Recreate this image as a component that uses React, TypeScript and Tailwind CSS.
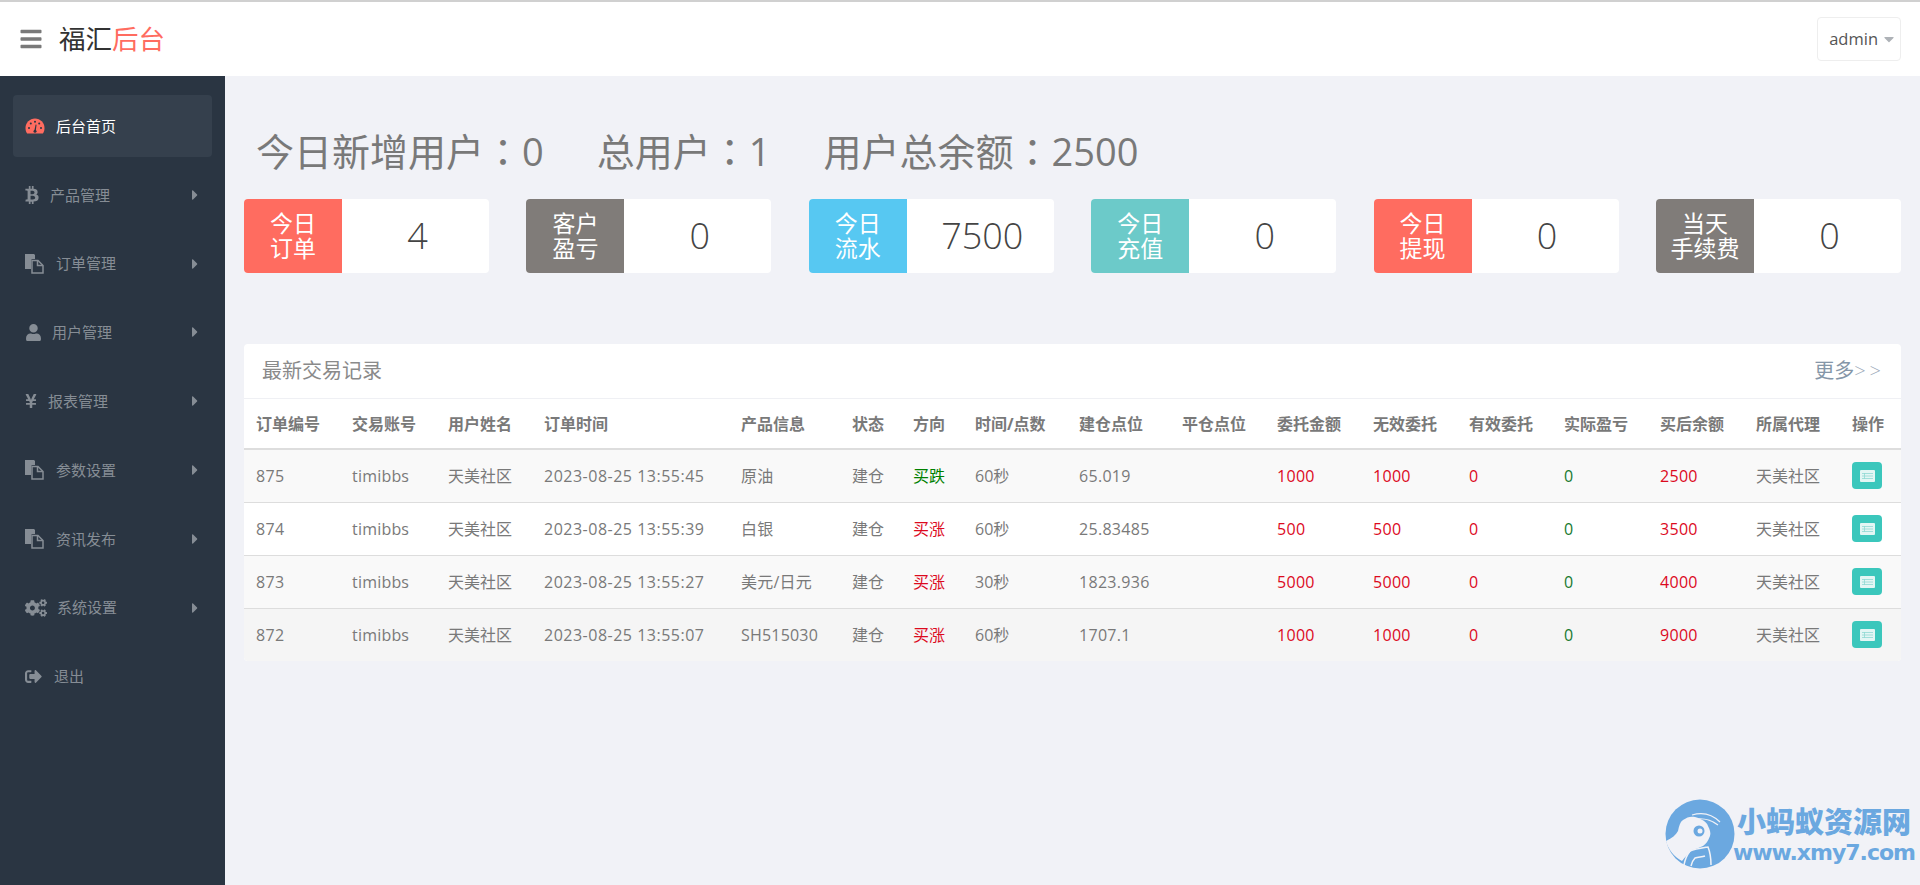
import React from "react";
import { FaBars, FaBtc, FaUser, FaYenSign, FaCogs, FaSignOutAlt, FaCaretRight, FaCaretDown } from "react-icons/fa";

const fontStack = '"Open Sans", "Noto Sans CJK SC", sans-serif';

function GaugeIcon() {
  return (
    <svg width="20" height="16" viewBox="0 0 20 16">
      <path d="M10 0.500C4.700 0.500 0.500 4.800 0.500 10c0 2 .5 3.900 1.600 5.500h15.800c1.100-1.600 1.600-3.500 1.600-5.500 0-5.200-4.200-9.500-9.500-9.500z" fill="#ff6c60" />
      <circle cx="4" cy="10" r="1" fill="#2a3542" />
      <circle cx="5.800" cy="5.600" r="1" fill="#2a3542" />
      <circle cx="10" cy="3.800" r="1" fill="#2a3542" />
      <circle cx="14.200" cy="5.600" r="1" fill="#2a3542" />
      <circle cx="16" cy="10" r="1" fill="#2a3542" />
      <path d="M9.200 13.400 10.600 6.600l.9.2-.8 6.800z" fill="#2a3542" />
      <circle cx="10" cy="13.200" r="1.500" fill="#2a3542" />
    </svg>
  );
}

function FilesIcon() {
  return (
    <svg width="19" height="20" viewBox="0 0 19 20" fill="currentColor">
      <path d="M0 0h9l1 1v4H7.500A1.500 1.500 0 0 0 6 6.500V15H0z" />
      <path d="M7 6.500h6l5 5V19H7z" fill="none" stroke="currentColor" strokeWidth="1.500" />
      <path d="M12.500 6.500v5h5.500" fill="none" stroke="currentColor" strokeWidth="1.500" />
    </svg>
  );
}

function ListIcon() {
  return (
    <svg width="15" height="12" viewBox="0 0 15 12">
      <rect x="0" y="0" width="15" height="12" rx="1" fill="#e3f6f4" />
      <path d="M2 3.500h11M2 6h11M2 8.500h11" stroke="#8fd9d3" strokeWidth="0.800" />
      <path d="M4.500 3v6" stroke="#8fd9d3" strokeWidth="0.800" />
    </svg>
  );
}

const menu = [
  { label: "产品管理", box: "w-[25px]", icon: <FaBtc size={18} className="w-[14px]" /> },
  { label: "订单管理", box: "w-[31px]", icon: <FilesIcon /> },
  { label: "用户管理", box: "w-[27px]", icon: <FaUser size={17} /> },
  { label: "报表管理", box: "w-[23px]", icon: <FaYenSign size={18} className="w-[12px]" /> },
  { label: "参数设置", box: "w-[31px]", icon: <FilesIcon /> },
  { label: "资讯发布", box: "w-[31px]", icon: <FilesIcon /> },
  { label: "系统设置", box: "w-[32px]", icon: <FaCogs size={22} /> },
];

const cards = [
  { top: "今日", bottom: "订单", value: "4", color: "bg-[#ff6c60]" },
  { top: "客户", bottom: "盈亏", value: "0", color: "bg-[#807c79]" },
  { top: "今日", bottom: "流水", value: "7500", color: "bg-[#57c8f2]" },
  { top: "今日", bottom: "充值", value: "0", color: "bg-[#6ccac9]" },
  { top: "今日", bottom: "提现", value: "0", color: "bg-[#ff6c60]" },
  { top: "当天", bottom: "手续费", value: "0", color: "bg-[#807c79]" },
];

const columns = [
  { label: "订单编号", width: "w-[96px]" },
  { label: "交易账号", width: "w-[96px]" },
  { label: "用户姓名", width: "w-[96px]" },
  { label: "订单时间", width: "w-[197px]" },
  { label: "产品信息", width: "w-[111px]" },
  { label: "状态", width: "w-[61px]" },
  { label: "方向", width: "w-[62px]" },
  { label: "时间/点数", width: "w-[104px]" },
  { label: "建仓点位", width: "w-[103px]" },
  { label: "平仓点位", width: "w-[95px]" },
  { label: "委托金额", width: "w-[96px]" },
  { label: "无效委托", width: "w-[96px]" },
  { label: "有效委托", width: "w-[95px]" },
  { label: "实际盈亏", width: "w-[96px]" },
  { label: "买后余额", width: "w-[96px]" },
  { label: "所属代理", width: "w-[96px]" },
  { label: "操作", width: "w-[61px]" },
];

const orders = [
  { id: "875", time: "2023-08-25 13:55:45", product: "原油", dir: "买跌", up: false, span: "60秒", open: "65.019", amount: "1000", after: "2500", bg: "bg-[#f9f9f9]" },
  { id: "874", time: "2023-08-25 13:55:39", product: "白银", dir: "买涨", up: true, span: "60秒", open: "25.83485", amount: "500", after: "3500", bg: "bg-white" },
  { id: "873", time: "2023-08-25 13:55:27", product: "美元/日元", dir: "买涨", up: true, span: "30秒", open: "1823.936", amount: "5000", after: "4000", bg: "bg-[#f9f9f9]" },
  { id: "872", time: "2023-08-25 13:55:07", product: "SH515030", dir: "买涨", up: true, span: "60秒", open: "1707.1", amount: "1000", after: "9000", bg: "bg-[#f5f5f5]" },
];

function Sidebar() {
  return (
    <aside className="w-[225px] shrink-0 bg-[#2a3542] px-[13px] pt-[19px] text-[15px] text-[#868d95]">
      <div className="mb-[6.800px] flex h-[62px] items-center rounded bg-[#35404d] px-3 text-white">
        <span className="w-[31px] shrink-0"><GaugeIcon /></span>
        <span>后台首页</span>
      </div>
      {menu.map((item) => (
        <div key={item.label} className="mb-[6.800px] flex h-[62px] items-center px-3">
          <span className={`shrink-0 ${item.box}`}>{item.icon}</span>
          <span className="flex-1">{item.label}</span>
          <FaCaretRight size={16} className="mr-[-3px]" />
        </div>
      ))}
      <div className="flex h-[62px] items-center px-3">
        <span className="w-[29px] shrink-0"><FaSignOutAlt size={17} /></span>
        <span>退出</span>
      </div>
    </aside>
  );
}

function Watermark() {
  return (
    <div className="absolute bottom-[16px] right-[5px] flex items-center">
      <svg width="70" height="70" viewBox="0 0 70 70" className="mr-[-2px]">
        <circle cx="35" cy="35" r="34.500" fill="#6ba8e0" />
        <path d="M1 42c6-3 10-6 12-10 1-5 2-9 5-11 4-3 8-4 12-3 7 2 12 5 13 9 2 4 3 7 2 10-2 5-4 8-7 10-4 2-8 3-11 4-3 3-7 7-10 11C9 58 3 50 1 42z" fill="#f1f2f7" />
        <circle cx="34" cy="32" r="5.500" fill="#6ba8e0" />
        <circle cx="35" cy="32" r="2.500" fill="#f1f2f7" />
        <path d="M27 16c10-3 20-1 28 7M31 20c8-1 14 0 22 6" fill="none" stroke="#f1f2f7" strokeWidth="1.200" />
        <path d="M19 66c1-6 3-10 6-14 5-2 12-3 18-4 2 5 3 11 3 18" fill="none" stroke="#f1f2f7" strokeWidth="1.500" />
        <path d="M26 67c1-4 2-6 4-8 4-1 7-1 10-2" fill="none" stroke="#f1f2f7" strokeWidth="1.500" />
      </svg>
      <div className="flex flex-col items-center text-[#6ba8e0]">
        <span className="text-[29px] leading-[38px] font-black font-['Noto_Sans_CJK_SC',sans-serif]">小蚂蚁资源网</span>
        <span className="text-[22px] leading-[28px] font-bold font-['DejaVu_Sans',sans-serif] tracking-[-1px]">www.xmy7.com</span>
      </div>
    </div>
  );
}

export default function App() {
  return (
    <div className="relative flex h-screen flex-col overflow-hidden bg-[#f1f2f7]" style={{ fontFamily: fontStack }}>
      <header className="flex h-[76px] shrink-0 items-center border-t-2 border-[#d0d0d0] bg-white pl-[19px] pr-[19px]">
        <FaBars size={24} className="text-[#797979]" />
        <div className="ml-[16px] mt-[1px] text-[26.500px] text-[#333]">
          福汇<span className="text-[#ff6c60]">后台</span>
        </div>
        <div className="ml-auto flex h-[44px] w-[84px] items-center justify-end gap-[3px] rounded border border-[#eeeeee] pr-[3px] text-[16.500px] text-[#555]">
          admin
          <FaCaretDown size={16} className="text-[#aeb2b7]" />
        </div>
      </header>

      <div className="flex flex-1">
        <Sidebar />
        <main className="flex-1 pl-[19px] pr-[19px] pt-[46px]">
          <h3 className="mb-[21px] h-[56px] pl-3 text-[38px] leading-[56px] text-[#797979]">
            <span className="mr-[53px]">今日新增用户<span className="font-['Noto_Sans_CJK_TC']">：</span>0</span>
            <span className="mr-[53px]">总用户<span className="font-['Noto_Sans_CJK_TC']">：</span>1</span>
            <span>用户总余额<span className="font-['Noto_Sans_CJK_TC']">：</span>2500</span>
          </h3>

          <div className="flex justify-between">
            {cards.map((card) => (
              <div key={card.top + card.bottom} className="flex h-[74px] w-[245px] overflow-hidden rounded bg-white">
                <div className={`flex w-[98px] flex-col items-center justify-center text-[23px] leading-[25px] text-white ${card.color}`}>
                  <span>{card.top}</span>
                  <span>{card.bottom}</span>
                </div>
                <div className="flex flex-1 items-center justify-center pl-1 text-[36px] font-light text-[#444]">{card.value}</div>
              </div>
            ))}
          </div>

          <section className="mt-[71px] overflow-hidden rounded bg-white text-[16px] text-[#797979]">
            <div className="flex h-[55px] items-center justify-between border-b border-[#eff0f4] pl-[18px] pr-[16px]">
              <span className="text-[20px] text-[#8a8a8a]">最新交易记录</span>
              <span className="text-[20px] text-[#8596a8]">更多<span className="font-light tracking-[4px] text-[#9aa8b8]">&gt;&gt;</span></span>
            </div>
            <table className="w-full table-fixed border-collapse">
              <thead>
                <tr className="h-[50px] border-b-2 border-[#ddd]">
                  {columns.map((col) => (
                    <th key={col.label} className={`${col.width} whitespace-nowrap pl-3 text-left font-bold`}>{col.label}</th>
                  ))}
                </tr>
              </thead>
              <tbody>
                {orders.map((row, i) => (
                  <tr key={row.id} className={`h-[53px] ${row.bg} ${i < orders.length - 1 ? "border-b border-[#ddd]" : ""}`}>
                    <td className="pl-3 tracking-[0.3px]">{row.id}</td>
                    <td className="pl-3 tracking-[0.2px]">timibbs</td>
                    <td className="pl-3">天美社区</td>
                    <td className="whitespace-nowrap pl-3 tracking-[0.5px]">{row.time}</td>
                    <td className="whitespace-nowrap pl-3 tracking-[0.2px]">{row.product}</td>
                    <td className="pl-3">建仓</td>
                    <td className={`pl-3 ${row.up ? "text-[#dc0a1e]" : "text-[#008000]"}`}>{row.dir}</td>
                    <td className="pl-3">{row.span}</td>
                    <td className="pl-3 tracking-[0.3px]">{row.open}</td>
                    <td className="pl-3"></td>
                    <td className="pl-3 tracking-[0.3px] text-[#dc0a1e]">{row.amount}</td>
                    <td className="pl-3 tracking-[0.3px] text-[#dc0a1e]">{row.amount}</td>
                    <td className="pl-3 text-[#dc0a1e]">0</td>
                    <td className="pl-3 text-[#187a30]">0</td>
                    <td className="pl-3 tracking-[0.3px] text-[#dc0a1e]">{row.after}</td>
                    <td className="pl-3">天美社区</td>
                    <td className="pl-3">
                      <div className="flex h-[27px] w-[30px] items-center justify-center rounded bg-[#3bc7bc]">
                        <ListIcon />
                      </div>
                    </td>
                  </tr>
                ))}
              </tbody>
            </table>
          </section>
        </main>
      </div>
      <Watermark />
    </div>
  );
}
